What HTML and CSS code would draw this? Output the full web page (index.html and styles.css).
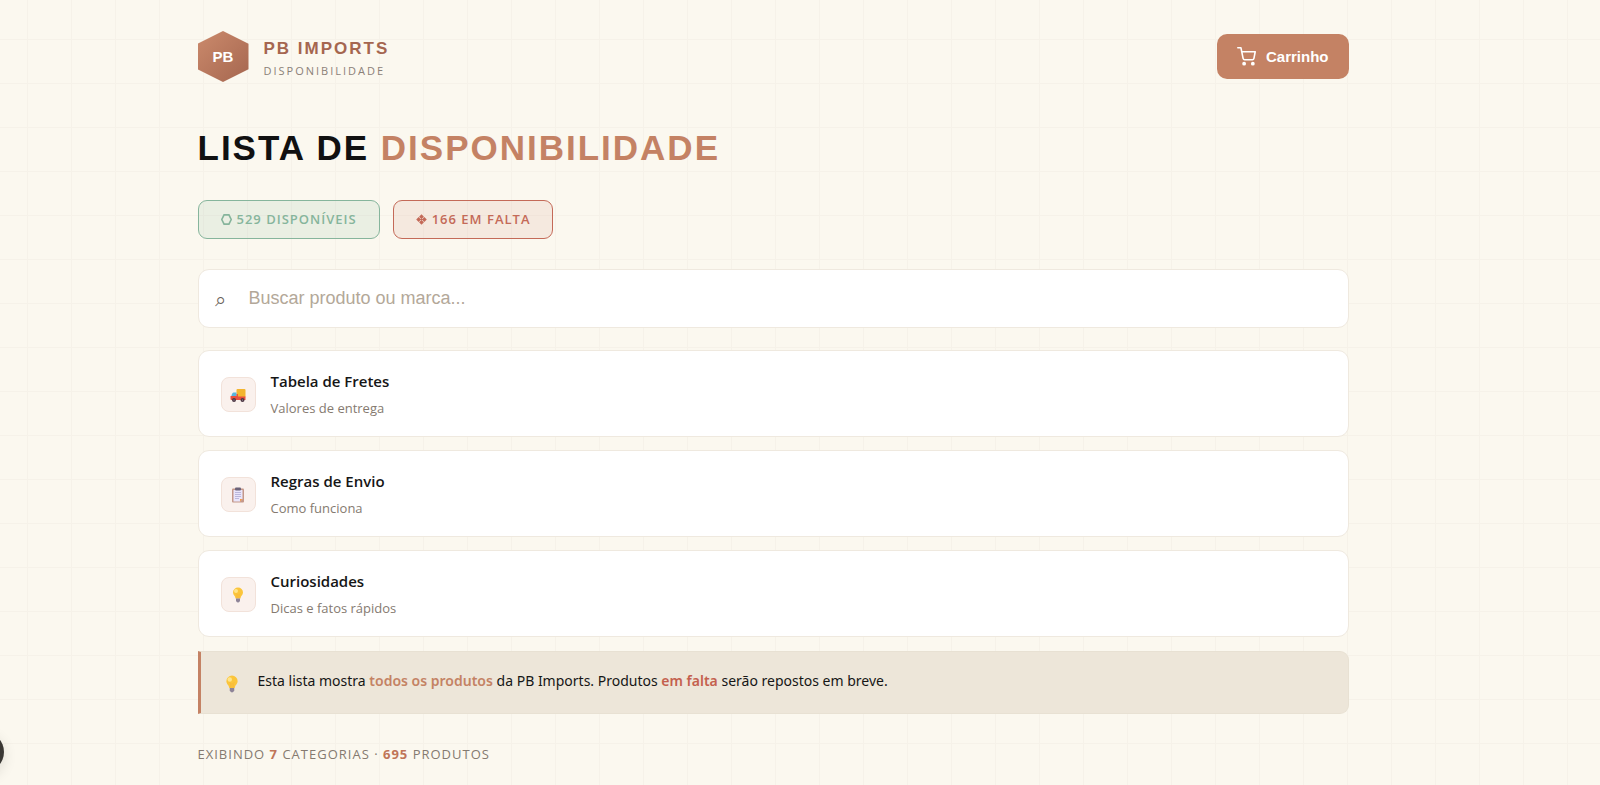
FILE: index.html
```html
<!DOCTYPE html>
<html lang="pt-BR">
<head>
    <meta charset="UTF-8">
    <meta name="viewport" content="width=device-width, initial-scale=1">
    <title>PB Imports</title>
    <link rel="stylesheet" href="styles.css">
</head>
<body>
    <div class="container">
        <header class="header">
            <a class="logo" href="#">
                <span class="logo-hex">PB</span>
                <span class="logo-text">
                    <span class="logo-name">PB IMPORTS</span>
                    <span class="logo-sub">DISPONIBILIDADE</span>
                </span>
            </a>
            <button class="cart-btn" type="button">
                <svg class="cart-icon" viewBox="0 0 24 24" fill="none" stroke="currentColor" stroke-width="2" stroke-linecap="round" stroke-linejoin="round">
                    <circle cx="9" cy="21" r="1.4" fill="currentColor"/>
                    <circle cx="20" cy="21" r="1.4" fill="currentColor"/>
                    <path d="M1 1h4l2.7 13.4a2 2 0 0 0 2 1.6h9.7a2 2 0 0 0 2-1.6L23 6H6"/>
                </svg>
                Carrinho
            </button>
        </header>

        <h1 class="title">LISTA DE <span>DISPONIBILIDADE</span></h1>

        <div class="badges">
            <span class="badge badge-ok">
                <svg viewBox="0 0 10 10" fill="none" stroke="currentColor" stroke-width="1.5"><path d="M2.8 .8h4.4L9.3 5 7.2 9.2H2.8L.7 5z"/></svg>
                529 DISPONÍVEIS
            </span>
            <span class="badge badge-out">
                <svg viewBox="0 0 10 10" fill="currentColor"><path d="M5 .2l2.2 2.2L5 4.6 2.8 2.4zM5 5.4l2.2 2.2L5 9.8 2.8 7.6zM2.4 2.8L4.6 5 2.4 7.2 .2 5zM7.6 2.8L9.8 5 7.6 7.2 5.4 5zM5 4l1 1-1 1-1-1z"/></svg>
                166 EM FALTA
            </span>
        </div>

        <label class="search">
            <span class="search-icon">⌕</span>
            <input type="text" placeholder="Buscar produto ou marca..." aria-label="Buscar produto ou marca">
        </label>

        <div class="cards">
            <button class="card" type="button">
                <span class="card-icon">
                    <svg viewBox="0 0 32 32">
                        <rect x="13" y="4" width="18" height="17" rx="2" fill="#f3b52f"/>
                        <path d="M13 20V11H7q-2 0-3 3l-2 6z" fill="#58b5df"/>
                        <path d="M1 18h12v-4h3v5h15v7H3q-2 0-2-2z" fill="#e8503f"/>
                        <circle cx="8" cy="26" r="4" fill="#4c3744"/>
                        <circle cx="25" cy="26" r="4" fill="#4c3744"/>
                        <circle cx="8" cy="26" r="1" fill="#b9adb9"/>
                        <circle cx="25" cy="26" r="1" fill="#b9adb9"/>
                    </svg>
                </span>
                <span class="card-text">
                    <span class="card-title">Tabela de Fretes</span>
                    <span class="card-sub">Valores de entrega</span>
                </span>
            </button>

            <button class="card" type="button">
                <span class="card-icon">
                    <svg viewBox="0 0 32 32">
                        <rect x="4" y="3" width="24" height="28" rx="2" fill="#c4988a"/>
                        <path d="M7 6h18v18l-5 5H7z" fill="#e9e5fa"/>
                        <path d="M20 29v-5h5z" fill="#f19a48"/>
                        <path d="M10 11h12M10 15h12M10 19h12M10 23h8" stroke="#aaa5d2" stroke-width="1.5"/>
                        <rect x="10" y="1" width="12" height="6" rx="2" fill="#6b6279"/>
                    </svg>
                </span>
                <span class="card-text">
                    <span class="card-title">Regras de Envio</span>
                    <span class="card-sub">Como funciona</span>
                </span>
            </button>

            <button class="card" type="button">
                <span class="card-icon">
                    <svg viewBox="0 0 32 32">
                        <path d="M16 1a10 10 0 0 0-10 10c0 5 5 7 5 12h10c0-5 5-7 5-12A10 10 0 0 0 16 1z" fill="#fbc53b"/>
                        <circle cx="12" cy="8" r="4" fill="#ffe58a"/>
                        <path d="M14 23v-8l-2-2m6 10v-8l2-2" stroke="#f5ac3a" stroke-width="1" fill="none"/>
                        <path d="M12 23h8v5q-4 6-8 0z" fill="#8e8498"/>
                    </svg>
                </span>
                <span class="card-text">
                    <span class="card-title">Curiosidades</span>
                    <span class="card-sub">Dicas e fatos rápidos</span>
                </span>
            </button>
        </div>

        <div class="notice">
            <svg class="notice-icon" viewBox="0 0 32 32">
                <path d="M16 1a10 10 0 0 0-10 10c0 5 5 7 5 12h10c0-5 5-7 5-12A10 10 0 0 0 16 1z" fill="#fbc53b"/>
                <circle cx="12" cy="8" r="4" fill="#ffe58a"/>
                <path d="M14 23v-8l-2-2m6 10v-8l2-2" stroke="#f5ac3a" stroke-width="1" fill="none"/>
                <path d="M12 23h8v5q-4 6-8 0z" fill="#8e8498"/>
            </svg>
            <p>Esta lista mostra <strong>todos os produtos</strong> da PB Imports. Produtos <strong class="out">em falta</strong> serão repostos em breve.</p>
        </div>

        <p class="count">EXIBINDO <strong>7</strong> CATEGORIAS · <strong>695</strong> PRODUTOS</p>
    </div>

    <button class="side-btn" type="button" aria-label="Menu"></button>
</body>
</html>
```

FILE: styles.css
```css
* {
    box-sizing: border-box;
    margin: 0;
    padding: 0;
}

body {
    min-height: 100vh;
    padding: 31px 54px 18px 0;
    overflow-x: hidden;
    font-family: "Open Sans", "Noto Sans", sans-serif;
    color: #161616;
    background-color: #fbf8ef;
    /* grade de fundo */
    background-image:
        linear-gradient(90deg, #f6f2e9 1px, transparent 1px),
        linear-gradient(#f6f2e9 1px, transparent 1px);
    background-size: 44px 44px;
    background-position: 27px 39px;
}

button {
    font: inherit;
    color: inherit;
    cursor: pointer;
}

.container {
    max-width: 1151px;
    margin: 0 auto;
}

.header {
    display: flex;
    align-items: center;
    justify-content: space-between;
}

.logo {
    display: flex;
    align-items: center;
    gap: 15px;
    text-decoration: none;
}

.logo-hex {
    display: flex;
    align-items: center;
    justify-content: center;
    width: 51px;
    height: 51px;
    font: bold 15px "Liberation Sans", Arial, sans-serif;
    color: #fff;
    background: linear-gradient(135deg, #cb8a6c, #a5664f);
    clip-path: polygon(50% 0, 100% 25%, 100% 75%, 50% 100%, 0 75%, 0 25%);
}

.logo-text {
    display: flex;
    flex-direction: column;
    gap: 3px;
    padding-top: 4px;
}

.logo-name {
    font: bold 17px/22px "Liberation Sans", Arial, sans-serif;
    letter-spacing: 2px;
    color: #a5664f;
}

.logo-sub {
    font-size: 11px;
    line-height: 16px;
    letter-spacing: 2px;
    color: #8b8178;
}

.cart-btn {
    display: flex;
    align-items: center;
    gap: 10px;
    height: 45px;
    padding: 0 20px;
    font: bold 15px "Liberation Sans", Arial, sans-serif;
    color: #fff;
    background: #c48264;
    border: none;
    border-radius: 10px;
}

.cart-icon {
    width: 19px;
    height: 19px;
}

.title {
    margin-top: 44px;
    font: bold 35px/44px "Liberation Sans", Arial, sans-serif;
    letter-spacing: 2px;
    color: #111;
}

.title span {
    color: #c48264;
}

.badges {
    display: flex;
    gap: 13px;
    margin-top: 30px;
}

.badge {
    display: flex;
    align-items: center;
    gap: 5px;
    padding: 0 22px;
    font-size: 13px;
    font-weight: 600;
    line-height: 37px;
    letter-spacing: 1px;
    border: 1px solid;
    border-radius: 9px;
}

.badge svg {
    width: 11px;
    height: 11px;
}

.badge-ok {
    color: #86b59c;
    background: rgba(134, 181, 156, 0.14);
}

.badge-out {
    color: #c46a58;
    background: rgba(196, 106, 88, 0.1);
}

.search {
    display: flex;
    align-items: center;
    margin-top: 30px;
    padding: 0 16px;
    height: 59px;
    background: #fff;
    border: 1px solid #efe9df;
    border-radius: 11px;
}

.search-icon {
    width: 34px;
    font: 20px "DejaVu Sans", sans-serif;
    color: #6b625a;
}

.search input {
    flex: 1;
    height: 100%;
    font: 18px "Liberation Sans", Arial, sans-serif;
    color: #161616;
    background: none;
    border: none;
    outline: none;
}

.search input::placeholder {
    color: #b3a899;
}

.cards {
    display: flex;
    flex-direction: column;
    gap: 13px;
    margin-top: 22px;
}

.card {
    display: flex;
    align-items: center;
    gap: 15px;
    padding: 18px 22px 17px;
    text-align: left;
    background: #fff;
    border: 1px solid #efe9df;
    border-radius: 11px;
}

.card-icon {
    display: flex;
    align-items: center;
    justify-content: center;
    width: 35px;
    height: 35px;
    background: #faf1ed;
    border: 1px solid #f2e2da;
    border-radius: 8px;
}

.card-icon svg {
    width: 16px;
    height: 16px;
    margin-top: 2px;
}

.card-text {
    display: flex;
    flex-direction: column;
    gap: 3px;
}

.card-title {
    font-size: 15px;
    font-weight: 600;
    line-height: 25px;
}

.card-sub {
    font-size: 13px;
    line-height: 22px;
    color: #857a70;
}

.notice {
    display: flex;
    align-items: center;
    gap: 17px;
    margin-top: 14px;
    padding: 16px 22px 20px;
    font-family: "Noto Sans", "Open Sans", sans-serif;
    font-size: 14px;
    line-height: 25px;
    background: #ede6d9;
    border: 1px solid #e8e1d3;
    border-left: 3px solid #c48264;
    border-radius: 0 9px 9px 0;
}

.notice-icon {
    width: 18px;
    height: 18px;
    margin-top: 6px;
}

.notice strong {
    font-weight: 600;
    color: #c48264;
}

.notice .out {
    color: #c4604e;
}

.count {
    margin-top: 29px;
    font-size: 13px;
    line-height: 22px;
    letter-spacing: 1px;
    color: #857a70;
}

.count strong {
    color: #c07558;
}

/* botão recolhido na borda da tela */
.side-btn {
    position: fixed;
    left: -36px;
    bottom: 13px;
    width: 40px;
    height: 40px;
    background: #3a3834;
    border: none;
    border-radius: 50%;
    box-shadow: 0 4px 14px rgba(0, 0, 0, 0.12);
}
```
